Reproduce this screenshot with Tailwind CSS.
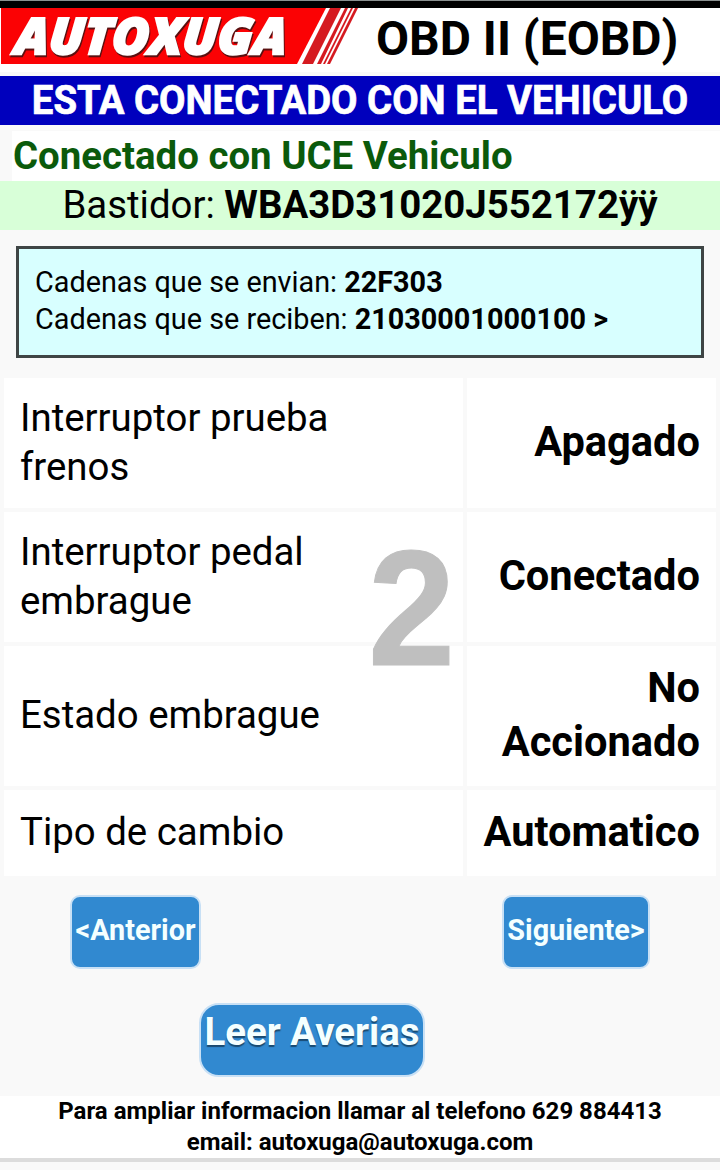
<!DOCTYPE html>
<html lang="es">
<head>
    <meta charset="UTF-8">
    <meta name="viewport" content="width=device-width, initial-scale=1.0">
    <title>OBD II (EOBD)</title>
    <script src="https://cdn.jsdelivr.net/npm/@tailwindcss/browser@4"></script>
</head>
<body class="bg-[#f9f9f9] font-[Roboto,sans-serif] text-black">
    <div class="w-[720px] h-[1170px] overflow-hidden flex flex-col whitespace-nowrap">
        <div class="h-2 shrink-0 bg-black border-t border-[#8a9090]"></div>

        <!-- header -->
        <header class="h-[68px] shrink-0 flex bg-white border-b-4 border-[#f9f9f9]">
            <svg class="w-[360px] h-14 shrink-0 overflow-visible" viewBox="0 0 360 56">
                <path fill="#fb0204" d="M1 0H326L297 56H1z"/>
                <path fill="#d51a20" d="M330 0H341L313 56H302zM345 0H348L321 56H317zM351 0H353L325 56H323zM355 0H358L330 56H327z"/>
                <g font-family="Open Sans, sans-serif" font-size="50" font-weight="800" font-style="italic" stroke-width="2.400">
                    <text transform="translate(15 47.500) skewX(-4)" fill="#5a1010" stroke="#5a1010" textLength="272" lengthAdjust="spacingAndGlyphs">AUTOXUGA</text>
                    <text transform="translate(14 46) skewX(-4)" fill="#fff" stroke="#fff" textLength="272" lengthAdjust="spacingAndGlyphs">AUTOXUGA</text>
                </g>
            </svg>
            <h1 class="pl-4 text-[48px] leading-[62px] font-bold">OBD II (EOBD)</h1>
        </header>

        <div class="h-[49px] shrink-0 bg-[#0000bd] text-white flex justify-center text-[41px] leading-[49px] font-bold"><span class="scale-x-[0.935] [-webkit-text-stroke:0.7px_white]">ESTA CONECTADO CON EL VEHICULO</span></div>
        <div class="h-14 shrink-0 pt-1.5 pl-3">
            <div class="h-[50px] pl-px bg-white text-[#0b5a0b] text-[38.4px] leading-[50px] font-bold">Conectado con UCE Vehiculo</div>
        </div>
        <div class="h-[49px] shrink-0 bg-[#d8ffd8] text-center text-[38.4px] leading-[47px]">Bastidor: <b>WBA3D31020J552172ÿÿ</b></div>

        <div class="h-28 shrink-0 mt-4 mx-4 pt-[15px] pl-4 bg-[#d8ffff] border-3 border-[#3f4545] text-[28.8px] leading-[37px]">
            <p>Cadenas que se envian: <b>22F303</b></p>
            <p>Cadenas que se reciben: <b>21030001000100 &gt;</b></p>
        </div>

        <!-- values -->
        <div class="relative shrink-0 mt-5 mx-1 grid grid-cols-[459px_249px] grid-rows-[130px_130px_140px_86px] gap-1 text-[38.4px] leading-[49px] *:bg-white *:flex *:items-center *:px-4">
            <div class="pb-0.5">Interruptor prueba<br>frenos</div>
            <div class="justify-end pb-0.5 text-right text-[41.6px] leading-[54px] font-bold">Apagado</div>
            <div class="pb-0.5">Interruptor pedal<br>embrague</div>
            <div class="justify-end pb-0.5 text-right text-[41.6px] leading-[54px] font-bold">Conectado</div>
            <div class="pb-1">Estado embrague</div>
            <div class="justify-end pb-0.5 text-right text-[41.6px] leading-[54px] font-bold">No<br>Accionado</div>
            <div class="pb-1">Tipo de cambio</div>
            <div class="justify-end pb-0.5 text-right text-[41.6px] leading-[54px] font-bold">Automatico</div>
            <span class="absolute left-[364px] top-[148px] origin-left scale-x-95 bg-transparent! px-0! font-['Liberation_Sans',sans-serif] text-[165px] leading-[165px] font-bold text-[#bfbfbf] [-webkit-text-stroke:1px_#bfbfbf]">2</span>
        </div>

        <!-- buttons -->
        <div class="shrink-0 mt-[19px] pl-[70px] pr-[70px] flex justify-between text-[28.8px] leading-[66px] font-bold text-[#f4ffff] text-shadow-[0_2px_1px_#1a4a70]">
            <button class="w-[131px] h-[74px] pb-1 flex items-center justify-center rounded-[10px] border-2 border-[#c8e0f5] bg-[#3189d0]">&lt;Anterior</button>
            <button class="w-[148px] h-[74px] pb-1 flex items-center justify-center rounded-[10px] border-2 border-[#c8e0f5] bg-[#3189d0]">Siguiente&gt;</button>
        </div>
        <button class="w-[226px] h-[74px] shrink-0 mt-[34px] ml-[199px] flex justify-center rounded-[20px] border-2 border-[#c8e0f5] bg-[#3189d0] text-[38.4px] leading-[54px] font-bold text-[#f4ffff] text-shadow-[0_2px_1px_#1a4a70]">Leer Averias</button>

        <footer class="h-[66px] shrink-0 mt-[19px] bg-white border-b-4 border-[#dcdcdc] text-center text-[24px] leading-[31px] font-bold">
            <p>Para ampliar informacion llamar al telefono 629 884413</p>
            <p>email: autoxuga@autoxuga.com</p>
        </footer>
    </div>
</body>
</html>
